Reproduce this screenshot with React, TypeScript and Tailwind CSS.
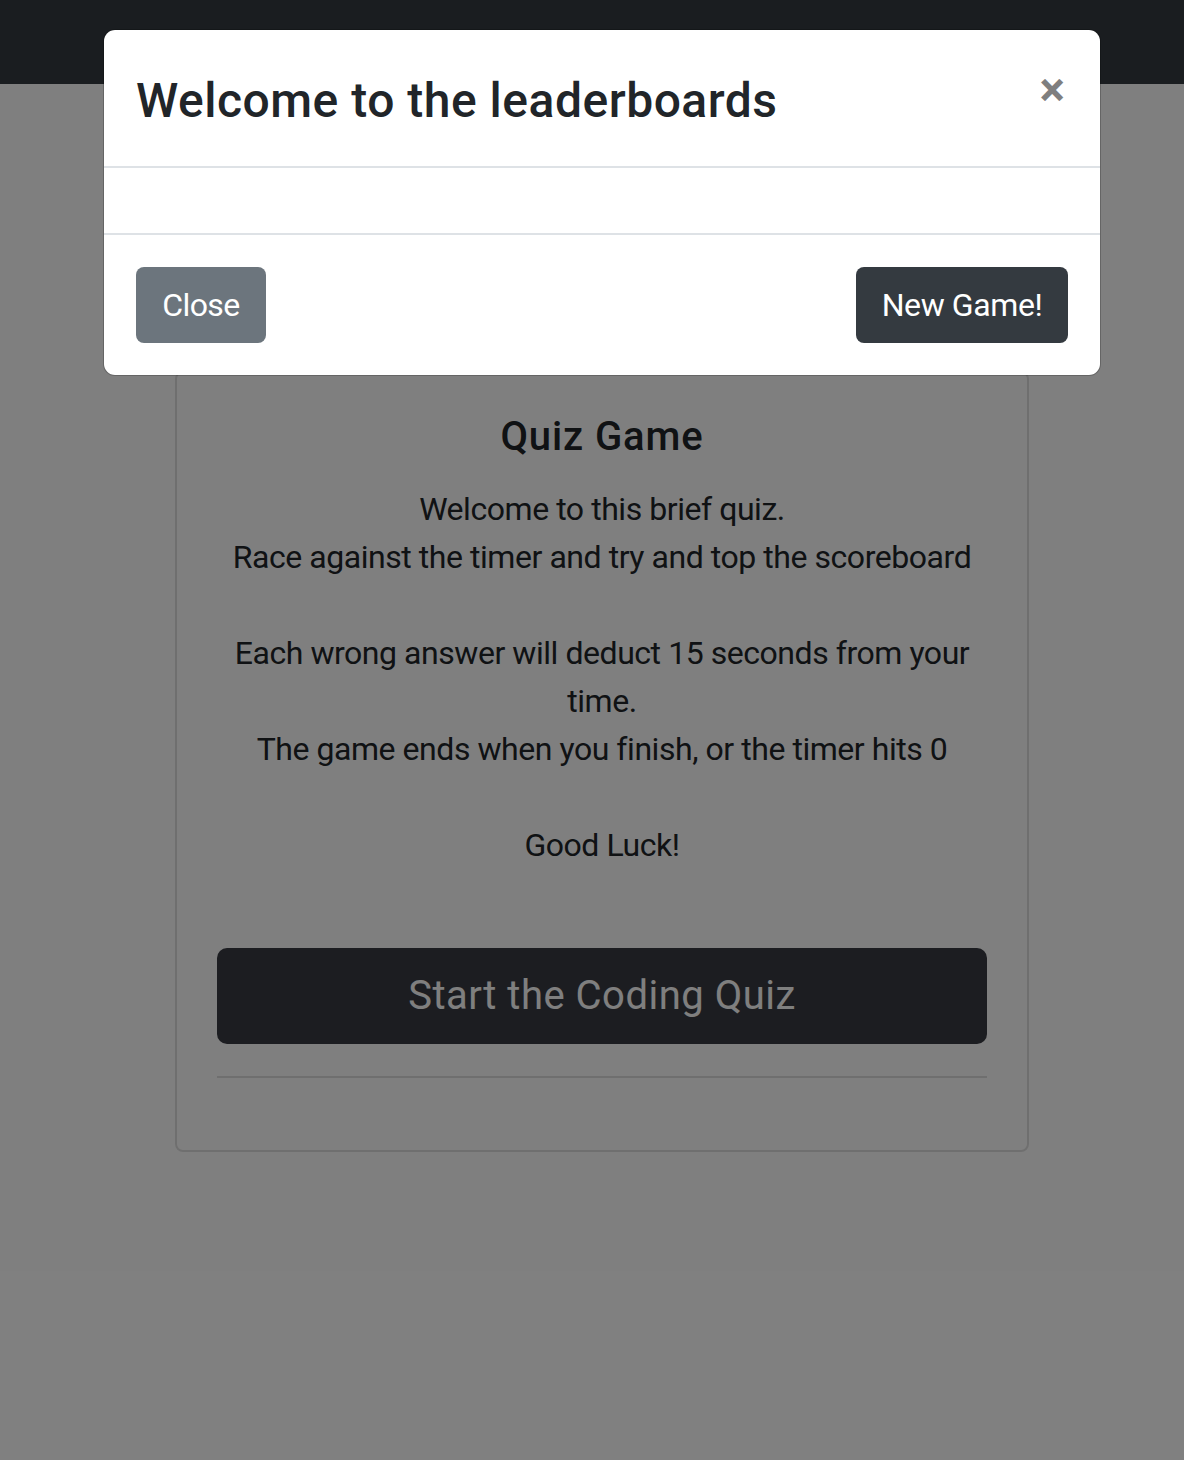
import React from 'react';

const font = { fontFamily: 'Roboto, "Liberation Sans", sans-serif' };

const App: React.FC = () => {
  return (
    <div className="relative min-h-[1460px] bg-white text-[#212529]" style={font}>
      {/* Page underneath */}
      <nav className="h-[84px] bg-[#343a40]"></nav>

      <main className="pt-[287px]">
        <div className="ml-[175px] w-[854px] rounded-[8px] border-2 border-[#dfdfdf] p-[40px] text-center">
          <h5 className="mb-[24px] text-[40px] font-medium leading-[48px] tracking-[0.9px]">Quiz Game</h5>
          <p className="mb-[79px] whitespace-nowrap text-[32px] leading-[48px] tracking-[-0.45px]">
            Welcome to this brief quiz.
            <br />
            Race against the timer and try and top the scoreboard
            <br />
            <br />
            Each wrong answer will deduct 15 seconds from your
            <br />
            time.
            <br />
            The game ends when you finish, or the timer hits 0
            <br />
            <br />
            Good Luck!
          </p>
          <button className="h-[96px] w-full rounded-[10px] bg-[#383a42] text-[40px] leading-[60px] tracking-[0.5px] text-white">
            Start the Coding Quiz
          </button>
          <hr className="mb-[32px] mt-[32px] border-t-2 border-[#dfdfdf]" />
        </div>
      </main>

      {/* Backdrop */}
      <div className="absolute inset-0 bg-black/50"></div>

      {/* Modal */}
      <div className="absolute left-[103px] top-[29px] w-[998px] overflow-hidden rounded-[12px] border border-black/20 bg-white bg-clip-padding">
        <div className="flex items-start justify-between border-b-2 border-[#dee2e6] px-[32px] pb-[29px] pt-[35px]">
          <h5 className="text-[48px] font-medium leading-[72px] tracking-[0.5px] text-[#212529]">
            Welcome to the leaderboards
          </h5>
          <button className="mr-[3px] mt-[1px] text-[48px] font-bold leading-[48px] text-black/50">×</button>
        </div>
        <div className="h-[65px]"></div>
        <div className="flex items-center justify-between border-t-2 border-[#dee2e6] px-[32px] py-[32px]">
          <button className="h-[76px] w-[130px] rounded-[8px] bg-[#6c757d] text-[32px] leading-[48px] tracking-[-0.6px] text-white">
            Close
          </button>
          <button className="h-[76px] w-[212px] rounded-[8px] bg-[#343a40] text-[32px] leading-[48px] tracking-[-0.4px] text-white">
            New Game!
          </button>
        </div>
      </div>
    </div>
  );
};

export default App;
